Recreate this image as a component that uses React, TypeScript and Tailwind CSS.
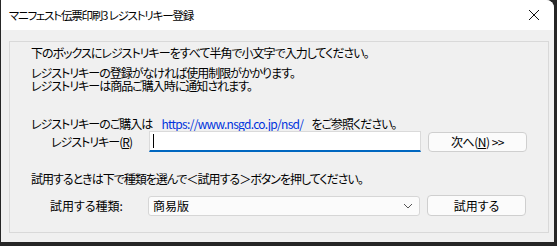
import React from 'react'

const font = "font-['Noto_Sans_CJK_JP','Noto_Sans',sans-serif] [font-feature-settings:'palt']"

export default function App() {
  return (
    <div className={`w-[557px] h-[246px] bg-[#262626] pl-px pr-[3px] pb-[4px] ${font} text-[12px] text-black leading-[13px] tracking-[-1px]`}>
      <div className="flex h-full flex-col overflow-hidden rounded-tr-[8px] bg-[#f0f0f0]">
        {/* title bar */}
        <div className="flex h-[30px] shrink-0 items-center justify-between bg-white pl-[8px] pr-[14px]">
          <span className="text-[11.5px] tracking-[-1.2px]">マニフェスト伝票印刷3 レジストリキー登録</span>
          <svg width="12" height="12" viewBox="0 0 12 12">
            <path d="M1 1 L11 11 M11 1 L1 11" stroke="#111" strokeWidth="1" />
          </svg>
        </div>

        {/* body */}
        <div className="flex-1 pl-[8px] pr-[5px] pt-[11px] pb-[9px]">
          <div className="h-full border border-[#d9d9d9] pt-[4px]">
            <p className="ml-[21px] h-[14px]">下のボックスにレジストリキーをすべて半角で小文字で入力してください。</p>
            <p className="ml-[21px] mt-[6px] h-[13px]">レジストリキーの登録がなければ使用制限がかかります。</p>
            <p className="ml-[21px] h-[13px]">レジストリキーは商品ご購入時に通知されます。</p>

            <p className="ml-[21px] mt-[24px] flex h-[14px] items-center">
              <span>レジストリキーのご購入は</span>
              <span className="ml-[9px] tracking-[-0.7px] text-[#0033dd] underline decoration-[#0033dd] underline-offset-2">https://www.nsgd.co.jp/nsd/</span>
              <span className="ml-[8px]">をご参照ください。</span>
            </p>

            <div className="mt-px flex h-[21px] items-center">
              <span className="ml-[41px] w-[98px]">
                レジストリキー(<span className="underline">R</span>)
              </span>
              <div className="flex h-[21px] w-[272px] items-center border border-b-2 border-[#dadada] border-b-[#0067c0] bg-white pl-[3px]">
                <span className="h-[14px] w-px bg-black" />
              </div>
              <button className="ml-[7px] flex h-[20px] w-[99px] items-center justify-center rounded-[4px] border border-[#cfcfcf] bg-[#fbfbfb] tracking-[-0.5px]">
                次へ(<span className="underline">N</span>)&nbsp;&gt;&gt;
              </button>
            </div>

            <p className="ml-[21px] mt-[20px] h-[14px]">試用するときは下で種類を選んで＜試用する＞ボタンを押してください。</p>

            <div className="mt-[9px] flex h-[21px] items-center">
              <span className="ml-[40px] w-[98px] tracking-normal">試用する種類:</span>
              <div className="flex h-[20px] w-[272px] items-center justify-between rounded-[3px] border border-[#d6d6d6] bg-[#fbfbfb] pl-[4px] pr-[6px]">
                <span className="tracking-normal">商易版</span>
                <svg width="10" height="6" viewBox="0 0 10 6">
                  <path d="M1 1 L5 5 L9 1" fill="none" stroke="#555" strokeWidth="1" />
                </svg>
              </div>
              <button className="ml-[7px] flex h-[21px] w-[99px] items-center justify-center rounded-[4px] border border-[#cfcfcf] bg-[#fbfbfb] tracking-normal">
                試用する
              </button>
            </div>
          </div>
        </div>
      </div>
    </div>
  )
}
